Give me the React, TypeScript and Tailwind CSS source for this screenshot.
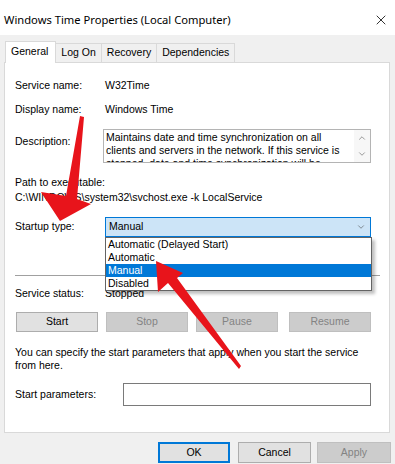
import { ChevronDown, ChevronUp, X } from "lucide-react";

function Tab({ label, active }: { label: string; active?: boolean }) {
  if (active) {
    return (
      <div className="relative z-10 -mb-px -mr-px flex h-[22px] items-center border border-b-0 border-[#d9d9d9] bg-white pl-[5px] pr-[7px] pb-[2px]">
        {label}
      </div>
    );
  }
  return (
    <div className="mt-[2px] -mr-px flex h-[19px] items-center border border-b-0 border-[#d9d9d9] bg-[#f0f0f0] px-[5px] pb-[1px]">
      {label}
    </div>
  );
}

function Btn({ label, disabled, w, className = "" }: { label: string; disabled?: boolean; w: string; className?: string }) {
  return (
    <div
      className={`flex h-[20px] items-center justify-center border ${w} ${className} ${
        disabled ? "border-[#bfbfbf] bg-[#cccccc] text-[#838383]" : "border-[#adadad] bg-[#e1e1e1] text-black"
      }`}
    >
      {label}
    </div>
  );
}

export default function App() {
  const desc = [
    "Maintains date and time synchronization on all",
    "clients and servers in the network. If this service is",
    "stopped, date and time synchronization will be",
    "unavailable.",
  ];

  return (
    <div className="relative h-[464px] w-[395px] overflow-hidden bg-[#f0f0f0] font-['Liberation_Sans',Arial,sans-serif] text-[10.5px] text-black">
      {/* title bar */}
      <div className="flex h-[35px] items-center justify-between bg-white pl-[4px] pr-[6px] pt-[5px]">
        <span className="font-['Noto_Sans',sans-serif] text-[11.2px]">Windows Time Properties (Local Computer)</span>
        <X className="h-[16px] w-[16px]" strokeWidth={1.2} />
      </div>

      {/* tabs */}
      <div className="flex pl-[5px] pt-[6px]">
        <Tab label="General" active />
        <Tab label="Log On" />
        <Tab label="Recovery" />
        <Tab label="Dependencies" />
      </div>

      {/* panel */}
      <div className="ml-[4px] mr-[5px] border border-[#d9d9d9] bg-white pb-[26px] pl-[10px] pr-[18px] pt-[16px]">
        <div className="flex h-[14px] items-center">
          <span className="w-[90px]">Service name:</span>
          <span>W32Time</span>
        </div>
        <div className="mt-[10px] flex h-[14px] items-center">
          <span className="w-[90px]">Display name:</span>
          <span>Windows Time</span>
        </div>
        <div className="mt-[12px] flex items-start">
          <span className="mt-[5px] w-[88px]">Description:</span>
          <div className="flex h-[34px] flex-1 overflow-hidden border border-[#b4b4b4]">
            <div className="flex-1 overflow-hidden pl-[2px] pt-[1px] leading-[13px]">
              {desc.map((l) => (
                <div key={l} className="whitespace-nowrap">
                  {l}
                </div>
              ))}
            </div>
            <div className="flex w-[16px] flex-col items-center justify-between bg-[#f7f7f7] py-[3px] text-[#606060]">
              <ChevronUp className="h-[10px] w-[10px]" strokeWidth={1.5} />
              <ChevronDown className="h-[10px] w-[10px]" strokeWidth={1.5} />
            </div>
          </div>
        </div>
        <div className="mt-[13px] flex h-[14px] items-center">Path to executable:</div>
        <div className="mt-[1px] flex h-[14px] items-center whitespace-nowrap">C:\WINDOWS\system32\svchost.exe -k LocalService</div>

        <div className="mt-[12px] flex items-center">
          <span className="w-[90px]">Startup type:</span>
          <div className="relative flex-1">
            <div className="flex h-[20px] items-center justify-between border border-[#0078d7] bg-[#cce4f7] pl-[3px] pr-[4px]">
              <span>Manual</span>
              <ChevronDown className="h-[10px] w-[10px] text-[#404040]" strokeWidth={1.3} />
            </div>
            <div className="absolute left-0 right-[-1px] top-[20px] z-20 border border-[#646464] bg-white shadow-[3px_3px_3px_rgba(0,0,0,0.25)]">
              <div className="flex h-[13px] items-center pl-[2px]">Automatic (Delayed Start)</div>
              <div className="flex h-[13px] items-center pl-[2px]">Automatic</div>
              <div className="flex h-[13px] items-center bg-[#0078d7] pl-[2px] text-white">Manual</div>
              <div className="flex h-[13px] items-center pl-[2px]">Disabled</div>
            </div>
          </div>
        </div>

        <div className="mr-[-9px] mt-[38px] h-px bg-[#a0a0a0]" />

        <div className="mt-[11px] flex h-[14px] items-center">
          <span className="w-[90px]">Service status:</span>
          <span>Stopped</span>
        </div>

        <div className="mt-[11px] flex pl-[1px]">
          <Btn label="Start" w="w-[82px]" />
          <Btn label="Stop" w="w-[82px]" disabled className="ml-[8px]" />
          <Btn label="Pause" w="w-[82px]" disabled className="ml-[8px]" />
          <Btn label="Resume" w="w-[82px]" disabled className="ml-[11px]" />
        </div>

        <div className="mt-[14px] whitespace-nowrap leading-[13px]">
          You can specify the start parameters that apply when you start the service
          <br />
          from here.
        </div>

        <div className="mt-[11px] flex items-center">
          <span className="w-[108px]">Start parameters:</span>
          <div className="h-[23px] flex-1 border border-[#7a7a7a] bg-white" />
        </div>
      </div>

      {/* dialog buttons */}
      <div className="mt-[9px] flex justify-end pr-[4px]">
        <div className="flex h-[21px] w-[72px] items-center justify-center border-2 border-[#0078d7] bg-[#e1e1e1]">OK</div>
        <div className="ml-[8px] flex h-[21px] w-[73px] items-center justify-center border border-[#adadad] bg-[#e1e1e1]">Cancel</div>
        <div className="ml-[6px] flex h-[21px] w-[74px] items-center justify-center border border-[#bfbfbf] bg-[#cccccc] text-[#838383]">Apply</div>
      </div>

      {/* red annotation arrows */}
      <svg className="pointer-events-none absolute left-0 top-0 z-30" width="395" height="464" viewBox="0 0 395 464">
        <polygon points="80,116 84,117 77,199 91,204 60,221 41,192 66,196" fill="#e8141b" />
        <polygon points="156,261 183,273 177,278 241,366 239,369 168,283 158,292" fill="#e8141b" />
      </svg>
    </div>
  );
}
